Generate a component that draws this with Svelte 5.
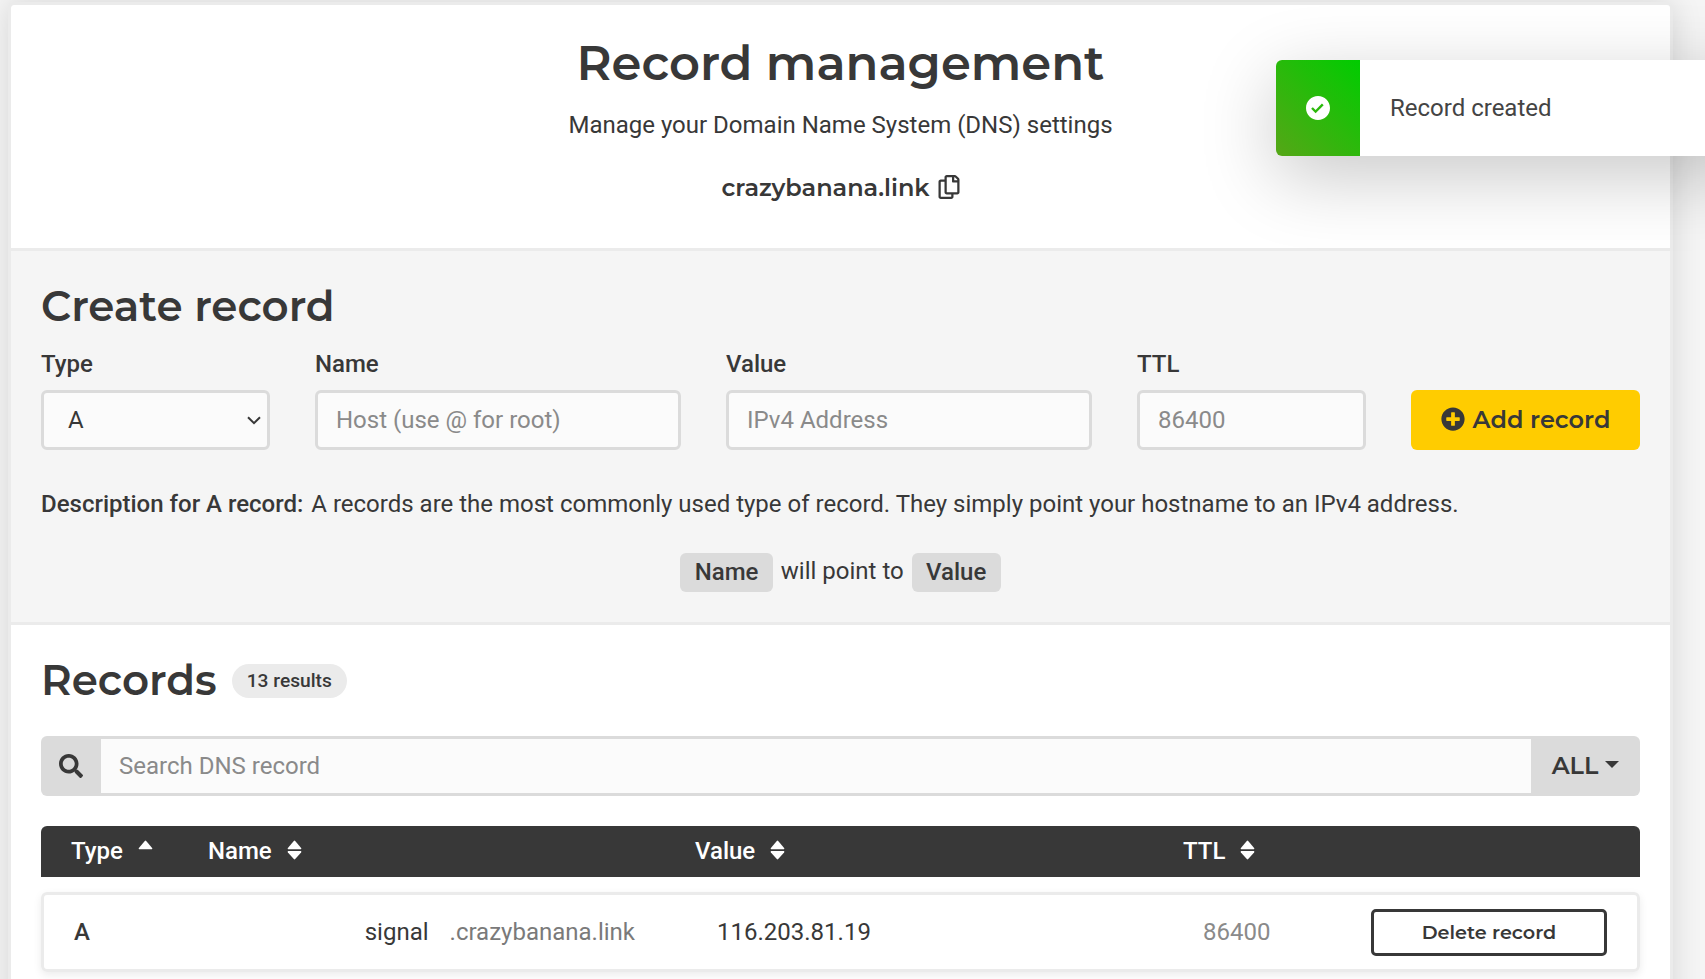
<script>
  const fields = [
    { label: 'Name', placeholder: 'Host (use @ for root)' },
    { label: 'Value', placeholder: 'IPv4 Address' },
    { label: 'TTL', placeholder: '86400' }
  ];
  const columns = [
    { label: 'Type', sorted: true },
    { label: 'Name', sorted: false },
    { label: 'Value', sorted: false },
    { label: 'TTL', sorted: false }
  ];
  const records = [{ type: 'A', name: 'signal', domain: '.crazybanana.link', value: '116.203.81.19', ttl: '86400' }];
</script>

<div class="page">
  <main class="card">
    <header class="intro">
      <h1>Record management</h1>
      <p>Manage your Domain Name System (DNS) settings</p>
      <div class="domain">
        <span>crazybanana.link</span>
        <svg class="copy" viewBox="0 0 448 512"><path d="M433.941 65.941l-51.882-51.882A48 48 0 0 0 348.118 0H176c-26.51 0-48 21.49-48 48v48H48c-26.51 0-48 21.49-48 48v320c0 26.51 21.49 48 48 48h224c26.51 0 48-21.49 48-48v-48h80c26.51 0 48-21.49 48-48V99.882a48 48 0 0 0-14.059-33.941zM266 464H54a6 6 0 0 1-6-6V150a6 6 0 0 1 6-6h74v224c0 26.51 21.49 48 48 48h96v42a6 6 0 0 1-6 6zm128-96H182a6 6 0 0 1-6-6V54a6 6 0 0 1 6-6h106v88c0 13.255 10.745 24 24 24h88v202a6 6 0 0 1-6 6zm6-256h-64V48h9.632c1.591 0 3.117.632 4.243 1.757l48.368 48.368a6 6 0 0 1 1.757 4.243V112z" /></svg>
      </div>
    </header>

    <section class="create">
      <h2>Create record</h2>
      <form class="fields">
        <label class="field">
          <span>Type</span>
          <div class="control select">
            A
            <svg viewBox="0 0 14 9"><path d="M1 1.2l6 6 6-6" /></svg>
          </div>
        </label>
        {#each fields as field}
          <label class="field">
            <span>{field.label}</span>
            <input class="control" placeholder={field.placeholder} />
          </label>
        {/each}
        <button type="button" class="add">
          <svg viewBox="0 0 512 512"><path d="M256 8C119 8 8 119 8 256s111 248 248 248 248-111 248-248S393 8 256 8zm144 276c0 6.6-5.4 12-12 12h-92v92c0 6.6-5.4 12-12 12h-56c-6.6 0-12-5.4-12-12v-92h-92c-6.6 0-12-5.4-12-12v-56c0-6.6 5.4-12 12-12h92v-92c0-6.6 5.4-12 12-12h56c6.6 0 12 5.4 12 12v92h92c6.6 0 12 5.4 12 12v56z" /></svg>
          <span>Add record</span>
        </button>
      </form>
      <p class="description"><b>Description for A record:</b> <span>A records are the most commonly used type of record. They simply point your hostname to an IPv4 address.</span></p>
      <div class="points">
        <b>Name</b><span>will point to</span><b>Value</b>
      </div>
    </section>

    <section class="records">
      <div class="heading">
        <h2>Records</h2>
        <span class="count">13 results</span>
      </div>
      <div class="search">
        <div class="lens">
          <svg viewBox="0 0 512 512"><path d="M505 442.7L405.3 343c-4.5-4.5-10.6-7-17-7H372c27.6-35.3 44-79.7 44-128C416 93.1 322.9 0 208 0S0 93.1 0 208s93.1 208 208 208c48.3 0 92.7-16.4 128-44v16.3c0 6.4 2.5 12.5 7 17l99.7 99.7c9.4 9.4 24.6 9.4 33.9 0l28.3-28.3c9.4-9.4 9.4-24.6.1-34zM208 336c-70.7 0-128-57.2-128-128 0-70.7 57.2-128 128-128 70.7 0 128 57.2 128 128 0 70.7-57.2 128-128 128z" /></svg>
        </div>
        <input placeholder="Search DNS record" />
        <button type="button" class="filter"><span>ALL</span><i></i></button>
      </div>

      <div class="grid thead">
        {#each columns as column}
          <div class="th">
            <span>{column.label}</span>
            <svg viewBox="0 0 15 20">
              <path d="M1.2 9.3h12.6q1-.5.3-1.4L8.2.9q-.7-.7-1.4 0L.9 7.9q-.7.9.3 1.4z" />
              {#if !column.sorted}
                <path d="M1.2 11h12.6q1 .5.3 1.4l-5.9 6.7q-.7.7-1.4 0L.9 12.4q-.7-.9.3-1.4z" />
              {/if}
            </svg>
          </div>
        {/each}
      </div>

      {#each records as record}
        <div class="grid row">
          <b class="type">{record.type}</b>
          <div class="host"><span>{record.name}</span><span class="muted">{record.domain}</span></div>
          <div class="value">{record.value}</div>
          <div class="ttl">{record.ttl}</div>
          <button type="button" class="delete"><span>Delete record</span></button>
        </div>
      {/each}
    </section>
  </main>

  <aside class="toast">
    <div class="status">
      <svg viewBox="2 2 20 20"><path d="M12 2C6.486 2 2 6.486 2 12s4.486 10 10 10 10-4.486 10-10S17.514 2 12 2zm-1.999 14.413l-3.713-3.705L7.7 11.292l2.299 2.295 5.294-5.294 1.414 1.414-6.706 6.706z" /></svg>
    </div>
    <p>Record created</p>
  </aside>
</div>

<style>
  :global(body) {
    margin: 0;
    overflow: hidden;
    background: #f5f5f5;
  }
  .page {
    position: relative;
    box-sizing: border-box;
    height: 979px;
    overflow: hidden;
    padding: 2px 32px 0 8px;
    color: #383838;
    font: 400 24px/36px Roboto, sans-serif;
  }
  .page * {
    box-sizing: border-box;
  }
  h1, h2, p {
    margin: 0;
  }
  b {
    font-weight: 500;
  }
  svg {
    display: block;
    flex: none;
    fill: currentColor;
  }
  input {
    min-width: 0;
    outline: 0;
    font: inherit;
    color: inherit;
  }
  input::placeholder {
    color: #8a8a8a;
    opacity: 1;
  }
  button {
    border: 0;
    padding: 0;
    color: inherit;
  }
  h1, h2, .domain, .add, .filter, .delete {
    font-family: Montserrat, Inter, sans-serif;
    font-weight: 600;
  }
  .card {
    height: 1100px;
    border: 3px solid #ebebeb;
    border-radius: 6px;
    background: #fff;
    box-shadow: 0 0 30px rgba(0, 0, 0, 0.13);
  }
  .intro {
    display: flex;
    flex-direction: column;
    align-items: center;
    height: 246px;
    padding-top: 28px;
    border-bottom: 3px solid #ebebeb;
  }
  h1 {
    font-size: 48px;
    line-height: 60px;
  }
  .intro p {
    margin-top: 14px;
  }
  .domain {
    display: flex;
    align-items: center;
    gap: 8px;
    margin-top: 27px;
    font-size: 24px;
  }
  .copy {
    width: 22px;
    height: 24px;
    margin-top: -2px;
  }
  .create {
    height: 374px;
    padding: 30px 30px 0;
    border-bottom: 3px solid #ebebeb;
    background: #f5f5f5;
  }
  h2 {
    font-size: 42px;
    line-height: 50px;
  }
  .fields {
    display: grid;
    grid-template-columns: 229px 366px 366px 229px 229px;
    justify-content: space-between;
    align-items: end;
    margin-top: 14px;
  }
  .field {
    display: grid;
    gap: 8px;
    padding-top: 1px;
  }
  .field > span {
    font-weight: 500;
  }
  .control {
    width: 100%;
    height: 60px;
    padding: 0 18px;
    border: 3px solid #dbdbdb;
    border-radius: 6px;
    background: #fbfbfb;
  }
  .select {
    display: flex;
    align-items: center;
    justify-content: space-between;
    padding: 0 6px 0 24px;
  }
  .select svg {
    width: 14px;
    height: 9px;
    fill: none;
    stroke: currentColor;
    stroke-width: 2;
  }
  .add {
    display: flex;
    align-items: center;
    justify-content: center;
    gap: 8px;
    height: 60px;
    padding-bottom: 2px;
    border-radius: 6px;
    background: #ffcc00;
    font-size: 24px;
  }
  .add svg {
    width: 24px;
    height: 24px;
  }
  .description {
    margin-top: 36px;
    white-space: nowrap;
  }
  .description span {
    margin-left: 2px;
  }
  .points {
    display: flex;
    align-items: center;
    justify-content: center;
    gap: 8px;
    margin-top: 31px;
  }
  .points b {
    height: 39px;
    padding: 0 14.4px;
    border-radius: 6px;
    background: #dbdbdb;
    line-height: 39px;
  }
  .points span {
    margin-top: -3px;
  }
  .records {
    padding: 30px 30px 0;
  }
  .heading {
    display: flex;
    align-items: center;
    gap: 15px;
    height: 51px;
  }
  .heading h2 {
    margin-top: -1px;
  }
  .count {
    height: 34px;
    padding: 0 15px;
    border-radius: 17px;
    background: #ebebeb;
    font-size: 19.2px;
    font-weight: 500;
    line-height: 33px;
  }
  .search {
    display: flex;
    height: 60px;
    margin-top: 30px;
    border-radius: 6px;
    background: #dbdbdb;
  }
  .lens {
    display: grid;
    place-items: center;
    width: 60px;
  }
  .lens svg {
    width: 24px;
    height: 24px;
  }
  .search input {
    flex: 1;
    padding: 0 18px;
    border: solid #dbdbdb;
    border-width: 3px 0;
    background: #fbfbfb;
  }
  .filter {
    display: flex;
    align-items: center;
    justify-content: center;
    gap: 7px;
    width: 109px;
    padding-bottom: 1px;
    background: none;
    font-size: 24px;
  }
  .filter i {
    border: 7px solid transparent;
    border-top-color: currentColor;
    border-bottom: 0;
    margin-top: -2px;
  }
  .grid {
    display: grid;
    grid-template-columns: 137px 487px 488px 1fr;
    align-items: center;
  }
  .thead {
    height: 51px;
    margin-top: 30px;
    padding: 0 0 2px 30px;
    border-radius: 6px 6px 0 0;
    background: #383838;
    color: #fff;
    font-weight: 500;
  }
  .th {
    display: flex;
    align-items: center;
    gap: 15px;
  }
  .th svg {
    width: 15px;
    height: 20px;
    margin-top: -1px;
  }
  .row {
    grid-template-columns: 137px 424px 568px 1fr 236px;
    height: 80px;
    margin-top: 15px;
    padding: 0 30px;
    border: 3px solid #ebebeb;
    border-radius: 6px;
    box-shadow: 0 3px 8px rgba(0, 0, 0, 0.08);
  }
  .host {
    display: flex;
    justify-content: flex-end;
    gap: 21px;
  }
  .value {
    padding-left: 82px;
  }
  .muted {
    color: #7a7a7a;
  }
  .ttl {
    color: #8a8a8a;
  }
  .delete {
    height: 47px;
    padding-bottom: 1px;
    border: 3px solid #383838;
    border-radius: 5px;
    background: #fff;
    font-size: 19.2px;
  }
  .toast {
    position: absolute;
    top: 60px;
    left: 1276px;
    display: flex;
    width: 480px;
    height: 96px;
    border-radius: 6px;
    background: #fff;
    box-shadow: 0 20px 75px rgba(0, 0, 0, 0.22);
  }
  .status {
    display: grid;
    place-items: center;
    width: 84px;
    border-radius: 6px 0 0 6px;
    background: linear-gradient(45deg, #56a617, #00cc00);
  }
  .status svg {
    width: 24px;
    height: 24px;
    fill: #fff;
  }
  .toast p {
    padding: 30px;
    color: #444;
  }
</style>
